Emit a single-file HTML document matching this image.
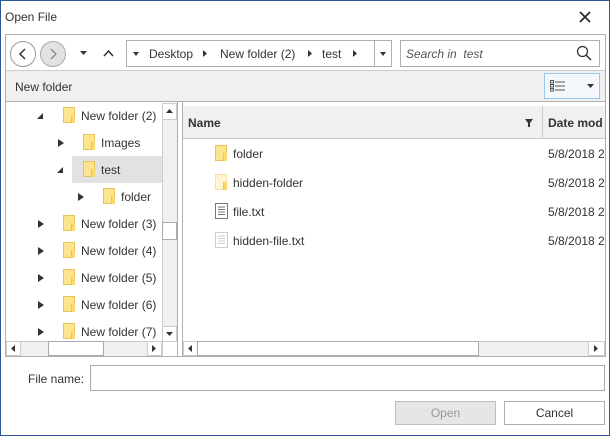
<!DOCTYPE html>
<html><head><style>
*{box-sizing:border-box;margin:0;padding:0}
body{width:610px;height:436px;overflow:hidden;background:#fff;font-family:"Liberation Sans",sans-serif;font-size:12px;color:#333;position:relative}
.a{position:absolute}
.win{left:0;top:0;width:610px;height:436px;border:1px solid #2b579a}
.fold{position:absolute;width:12px;height:16px;background:#fde58f;border:1px solid #e8c35a}
.fold:after{content:"";position:absolute;right:-1px;bottom:-1px;width:3px;height:8px;border-left:1px solid #e8c35a;background:#fbd86a}
.tri{position:absolute;width:0;height:0;border-top:4px solid transparent;border-bottom:4px solid transparent;border-left:6px solid #333}
.trid{position:absolute;width:0;height:0;border-left:4px solid transparent;border-bottom:6px solid #444;transform:rotate(0deg)}
.t{position:absolute;font-size:12px;color:#333;white-space:nowrap}
.sb{position:absolute;background:#f0f0f0}
.btn{position:absolute;border:1px solid #adadad;text-align:center;line-height:22px;font-size:12px}
</style></head><body>
<div class="a win"></div>
<div class="t" style="left:5px;top:10px">Open File</div>
<svg class="a" style="left:579px;top:11px" width="12" height="12"><path d="M1 1L11 11M11 1L1 11" stroke="#222" stroke-width="1.6"/></svg>
<!-- main frame -->
<div class="a" style="left:5px;top:34px;width:601px;height:323px;border:1px solid #b0b0b0"></div>
<div class="a" style="left:6px;top:70px;width:599px;height:32px;background:#f0f0f0;border-top:1px solid #ccc;border-bottom:1px solid #b0b0b0"></div>
<!-- nav -->
<div class="a" style="left:10px;top:41px;width:26px;height:26px;border:1px solid #999;border-radius:50%;background:#fff"></div>
<svg class="a" style="left:18px;top:48px" width="10" height="12"><path d="M7 1L2 6L7 11" stroke="#333" stroke-width="1.5" fill="none"/></svg>
<div class="a" style="left:40px;top:41px;width:26px;height:26px;border:1px solid #aaa;border-radius:50%;background:#e2e2e2"></div>
<svg class="a" style="left:49px;top:48px" width="10" height="12"><path d="M2 1L7 6L2 11" stroke="#888" stroke-width="1.3" fill="none"/></svg>
<svg class="a" style="left:80px;top:51px" width="7" height="5"><path d="M0 0H7L3.5 4Z" fill="#333"/></svg>
<svg class="a" style="left:103px;top:49px" width="11" height="8"><path d="M1 7L5.5 2L10 7" stroke="#333" stroke-width="1.5" fill="none"/></svg>
<div class="a" style="left:126px;top:40px;width:266px;height:27px;border:1px solid #b0b0b0"></div>
<div class="a" style="left:374px;top:41px;width:1px;height:25px;background:#b0b0b0"></div>
<svg class="a" style="left:133px;top:52px" width="6" height="4"><path d="M0 0H6L3 4Z" fill="#333"/></svg>
<div class="t" style="left:149px;top:47px">Desktop</div>
<svg class="a" style="left:203px;top:50px" width="4" height="7"><path d="M0 0V7L4 3.5Z" fill="#333"/></svg>
<div class="t" style="left:220px;top:47px">New folder (2)</div>
<svg class="a" style="left:308px;top:50px" width="4" height="7"><path d="M0 0V7L4 3.5Z" fill="#333"/></svg>
<div class="t" style="left:322px;top:47px">test</div>
<svg class="a" style="left:353px;top:50px" width="4" height="7"><path d="M0 0V7L4 3.5Z" fill="#333"/></svg>
<svg class="a" style="left:380px;top:52px" width="6" height="4"><path d="M0 0H6L3 4Z" fill="#333"/></svg>
<div class="a" style="left:400px;top:40px;width:200px;height:27px;border:1px solid #b0b0b0"></div>
<div class="t" style="left:406px;top:47px;font-style:italic;color:#555">Search in&nbsp; test</div>
<svg class="a" style="left:576px;top:45px" width="16" height="16"><circle cx="6.5" cy="6.5" r="5" stroke="#333" stroke-width="1.3" fill="none"/><path d="M10 10L15 15" stroke="#333" stroke-width="1.5"/></svg>
<!-- toolbar -->
<div class="t" style="left:15px;top:80px">New folder</div>
<div class="a" style="left:544px;top:73px;width:56px;height:26px;border:1px solid #99c9f0;background:#f4f8fc"></div>
<svg class="a" style="left:550px;top:80px" width="16" height="12"><g stroke="#555" stroke-width="1" fill="none"><rect x="0.5" y="0.5" width="3" height="2.5"/><rect x="0.5" y="4.5" width="3" height="2.5"/><rect x="0.5" y="8.5" width="3" height="2.5"/><path d="M5 2H15M5 6H15M5 10H15"/></g></svg>
<svg class="a" style="left:587px;top:84px" width="7" height="5"><path d="M0 0H7L3.5 4Z" fill="#333"/></svg>
<!-- tree -->
<div class="a" style="left:72px;top:156px;width:90px;height:27px;background:#e2e2e2"></div>
<div class="sb" style="left:162px;top:103px;width:15px;height:238px;border-left:1px solid #ccc"></div>
<div class="a" style="left:162px;top:103px;width:15px;height:17px;background:#fff;border:1px solid #ccc"></div>
<svg class="a" style="left:166px;top:109px" width="7" height="4"><path d="M0 4H7L3.5 0Z" fill="#333"/></svg>
<div class="a" style="left:162px;top:222px;width:15px;height:18px;background:#fff;border:1px solid #aaa"></div>
<div class="a" style="left:162px;top:326px;width:15px;height:16px;background:#fff;border:1px solid #ccc"></div>
<svg class="a" style="left:166px;top:332px" width="7" height="4"><path d="M0 0H7L3.5 4Z" fill="#333"/></svg>
<div class="sb" style="left:6px;top:341px;width:156px;height:15px;border-top:1px solid #ccc"></div>
<div class="a" style="left:6px;top:341px;width:15px;height:15px;background:#fff;border:1px solid #ccc"></div>
<svg class="a" style="left:11px;top:345px" width="4" height="7"><path d="M4 0V7L0 3.5Z" fill="#333"/></svg>
<div class="a" style="left:48px;top:341px;width:56px;height:15px;background:#fff;border:1px solid #aaa"></div>
<div class="a" style="left:147px;top:341px;width:15px;height:15px;background:#fff;border:1px solid #ccc"></div>
<svg class="a" style="left:152px;top:345px" width="4" height="7"><path d="M0 0V7L4 3.5Z" fill="#333"/></svg>
<div class="a" style="left:162px;top:341px;width:15px;height:15px;border-left:1px solid #ccc;border-top:1px solid #ccc"></div>
<div class="a" style="left:177px;top:102px;width:1px;height:254px;background:#b0b0b0"></div>

<svg class="a" style="left:37px;top:113px" width="6" height="6"><path d="M6 0V6H0Z" fill="#333"/></svg>
<div class="fold" style="left:63px;top:107px"></div><div class="t" style="left:81px;top:109px">New folder (2)</div>
<div class="tri" style="left:58px;top:139px"></div>
<div class="fold" style="left:83px;top:134px"></div><div class="t" style="left:101px;top:136px">Images</div>
<svg class="a" style="left:57px;top:167px" width="6" height="6"><path d="M6 0V6H0Z" fill="#333"/></svg>
<div class="fold" style="left:83px;top:161px"></div><div class="t" style="left:101px;top:163px">test</div>
<div class="tri" style="left:78px;top:193px"></div>
<div class="fold" style="left:103px;top:188px"></div><div class="t" style="left:121px;top:190px">folder</div>
<div class="tri" style="left:38px;top:220px"></div><div class="fold" style="left:63px;top:215px"></div><div class="t" style="left:81px;top:217px">New folder (3)</div>
<div class="tri" style="left:38px;top:247px"></div><div class="fold" style="left:63px;top:242px"></div><div class="t" style="left:81px;top:244px">New folder (4)</div>
<div class="tri" style="left:38px;top:274px"></div><div class="fold" style="left:63px;top:269px"></div><div class="t" style="left:81px;top:271px">New folder (5)</div>
<div class="tri" style="left:38px;top:301px"></div><div class="fold" style="left:63px;top:296px"></div><div class="t" style="left:81px;top:298px">New folder (6)</div>
<div class="tri" style="left:38px;top:328px"></div><div class="fold" style="left:63px;top:323px"></div><div class="t" style="left:81px;top:325px">New folder (7)</div>
<!-- list -->
<div class="a" style="left:182px;top:102px;width:1px;height:254px;background:#b0b0b0"></div>
<div class="a" style="left:183px;top:106px;width:422px;height:33px;background:#f0f0f0;border-bottom:1px solid #ccc"></div>
<div class="a" style="left:542px;top:106px;width:1px;height:33px;background:#ccc"></div>
<div class="t" style="left:188px;top:116px;font-weight:bold">Name</div>
<svg class="a" style="left:525px;top:119px" width="8" height="8"><path d="M0 0H8L5 4V8H3V4Z" fill="#333"/></svg>
<div class="t" style="left:548px;top:116px;font-weight:bold">Date mod</div>
<div class="fold" style="left:215px;top:145px"></div><div class="t" style="left:233px;top:147px">folder</div>
<div class="fold" style="left:215px;top:174px;background:#fff4cf;border-color:#f6e3a8"></div><div class="t" style="left:233px;top:176px">hidden-folder</div>
<svg class="a" style="left:215px;top:203px" width="13" height="16"><path d="M0.5 0.5H12.5V15.5H0.5Z M3 4H10M3 6.5H10M3 9H10M3 11.5H10" stroke="#777" fill="#fff"/></svg><div class="t" style="left:233px;top:205px">file.txt</div>
<svg class="a" style="left:215px;top:232px" width="13" height="16"><path d="M0.5 0.5H12.5V15.5H0.5Z M3 4H10M3 6.5H10M3 9H10M3 11.5H10" stroke="#ccc" fill="#fff"/></svg><div class="t" style="left:233px;top:234px">hidden-file.txt</div>
<div class="t" style="left:548px;top:147px">5/8/2018 2</div>
<div class="t" style="left:548px;top:176px">5/8/2018 2</div>
<div class="t" style="left:548px;top:205px">5/8/2018 2</div>
<div class="t" style="left:548px;top:234px">5/8/2018 2</div>
<div class="a" style="left:605px;top:34px;width:1px;height:1px"></div>
<div class="sb" style="left:183px;top:341px;width:422px;height:15px;border-top:1px solid #ccc"></div>
<div class="a" style="left:183px;top:341px;width:15px;height:15px;background:#fff;border:1px solid #ccc"></div>
<svg class="a" style="left:188px;top:345px" width="4" height="7"><path d="M4 0V7L0 3.5Z" fill="#333"/></svg>
<div class="a" style="left:197px;top:341px;width:282px;height:15px;background:#fff;border:1px solid #aaa"></div>
<div class="a" style="left:588px;top:341px;width:17px;height:15px;background:#fff;border:1px solid #ccc"></div>
<svg class="a" style="left:594px;top:345px" width="4" height="7"><path d="M0 0V7L4 3.5Z" fill="#333"/></svg>
<!-- bottom -->
<div class="t" style="left:28px;top:372px">File name:</div>
<div class="a" style="left:90px;top:365px;width:515px;height:26px;border:1px solid #aaa"></div>
<div class="btn" style="left:395px;top:401px;width:101px;height:24px;background:#e6e6e6;border-color:#bfbfbf;color:#999">Open</div>
<div class="btn" style="left:504px;top:401px;width:101px;height:24px;background:#fff">Cancel</div>
</body></html>
